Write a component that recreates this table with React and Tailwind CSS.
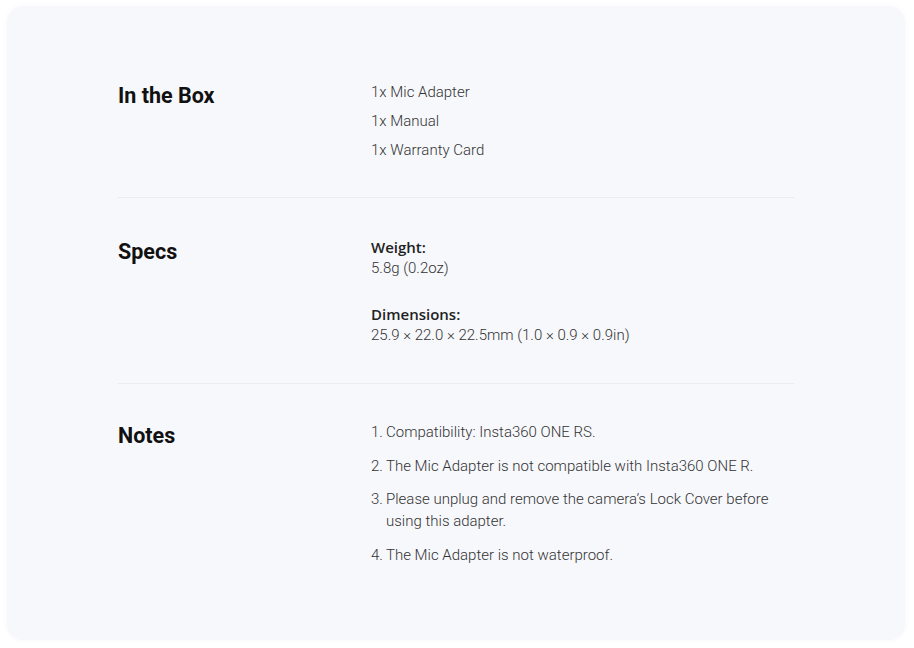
// Ficha do produto: conteúdo da caixa, especificações e notas.
const boxItems = ['1x Mic Adapter', '1x Manual', '1x Warranty Card'];

const notes = [
  'Compatibility: Insta360 ONE RS.',
  'The Mic Adapter is not compatible with Insta360 ONE R.',
  "Please unplug and remove the camera’s Lock Cover before using this adapter.",
  'The Mic Adapter is not waterproof.',
];

const Heading = ({ children }) => (
  <h3 className="w-[253px] shrink-0 pt-[1px] text-[21.5px] leading-[28px] font-bold text-[#111]">
    {children}
  </h3>
);

export default function App() {
  return (
    <div className="min-h-screen bg-white pt-[6px] pl-[7px] pr-[9px] font-['Roboto',sans-serif]">
      <div className="rounded-[16px] bg-[#f7f8fc] px-[111px] pt-[38px] pb-[74px] shadow-[0_0_6px_rgba(0,0,0,0.03)]">
        {/* In the Box */}
        <section className="flex pt-[37px] pb-[36px] border-b border-[#eaecf2]">
          <Heading>In the Box</Heading>
          <ul className="flex flex-col gap-[7px] text-[15px] leading-[22px] font-light text-[#333]">
            {boxItems.map((item) => (
              <li key={item}>{item}</li>
            ))}
          </ul>
        </section>

        {/* Specs */}
        <section className="flex pt-[39px] pb-[37px] border-b border-[#eaecf2]">
          <Heading>Specs</Heading>
          <div className="flex flex-col gap-[25px] text-[15px] leading-[21px] text-[#333]">
            <div>
              <p className="font-['Open_Sans',sans-serif] font-semibold text-[#222]">Weight:</p>
              <p className="font-light">5.8g (0.2oz)</p>
            </div>
            <div>
              <p className="font-['Open_Sans',sans-serif] font-semibold text-[#222]">Dimensions:</p>
              <p className="font-light">25.9 × 22.0 × 22.5mm (1.0 × 0.9 × 0.9in)</p>
            </div>
          </div>
        </section>

        {/* Notes */}
        <section className="flex pt-[37px]">
          <Heading>Notes</Heading>
          <ol className="flex flex-col gap-[11.5px] text-[15px] leading-[22px] font-light text-[#333]">
            {notes.map((note, i) => (
              <li key={i} className="flex w-[421px]">
                <span className="w-[15px] shrink-0">{i + 1}.</span>
                <span>{note}</span>
              </li>
            ))}
          </ol>
        </section>
      </div>
    </div>
  );
}
